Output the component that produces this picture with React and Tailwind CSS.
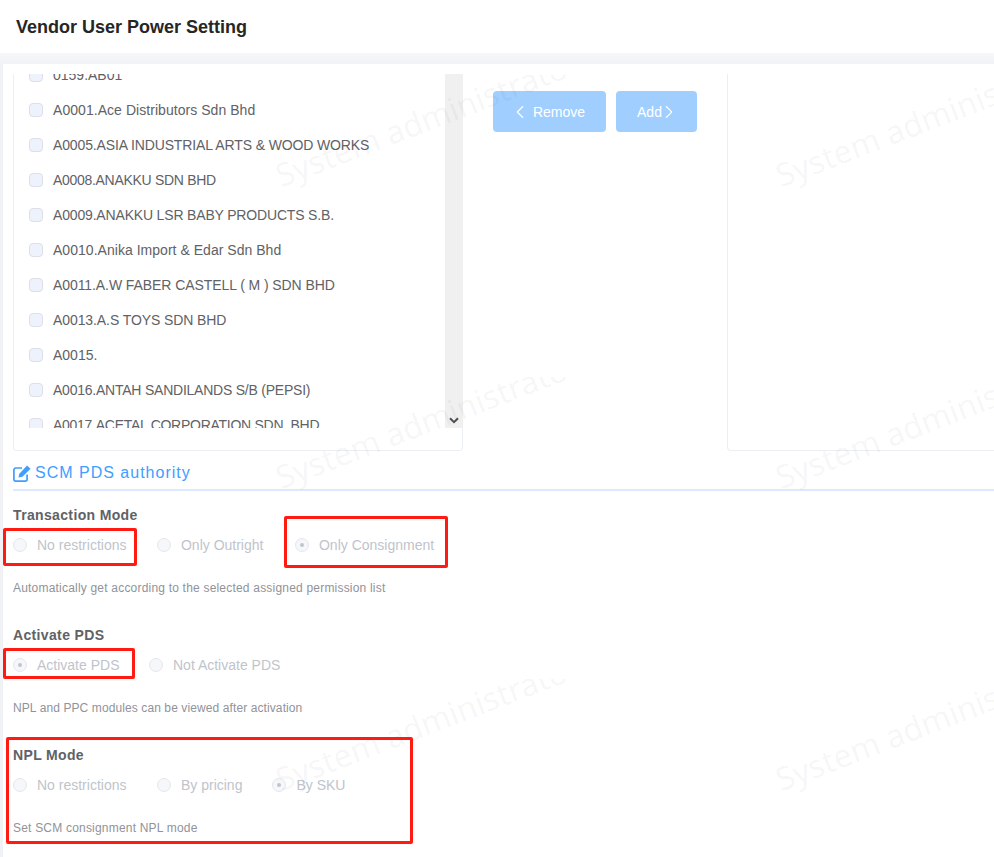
import React from "react";
import { ChevronLeft, ChevronRight } from "lucide-react";

// tracking per row, uppercase names run a bit wide in this font
const vendors = [
  { name: "0159.AB01", track: "tracking-[0px]" },
  { name: "A0001.Ace Distributors Sdn Bhd", track: "tracking-[0.05px]" },
  { name: "A0005.ASIA INDUSTRIAL ARTS & WOOD WORKS", track: "tracking-[-0.13px]" },
  { name: "A0008.ANAKKU SDN BHD", track: "tracking-[-0.3px]" },
  { name: "A0009.ANAKKU LSR BABY PRODUCTS S.B.", track: "tracking-[-0.17px]" },
  { name: "A0010.Anika Import & Edar Sdn Bhd", track: "tracking-[0.03px]" },
  { name: "A0011.A.W FABER CASTELL ( M ) SDN BHD", track: "tracking-[-0.08px]" },
  { name: "A0013.A.S TOYS SDN BHD", track: "tracking-[-0.09px]" },
  { name: "A0015.", track: "tracking-[0px]" },
  { name: "A0016.ANTAH SANDILANDS S/B (PEPSI)", track: "tracking-[-0.23px]" },
  { name: "A0017.ACETAL CORPORATION SDN. BHD", track: "tracking-[-0.27px]" },
];

// watermark tiles, they lie over the whole page
const tiles = [
  "left-[267px] top-[75px]",
  "left-[767px] top-[75px]",
  "left-[267px] top-[377px]",
  "left-[767px] top-[377px]",
  "left-[267px] top-[679px]",
  "left-[767px] top-[679px]",
];

// red annotation boxes drawn on the screenshot
const marks = [
  "left-[3px] top-[528px] w-[134px] h-[38px]",
  "left-[284px] top-[516px] w-[164px] h-[52px]",
  "left-[3px] top-[648px] w-[132px] h-[31px]",
  "left-[6px] top-[737px] w-[407px] h-[107px]",
];

function EditIcon() {
  return (
    <svg width="18" height="18" viewBox="0 0 18 18" fill="none" className="shrink-0">
      <path
        d="M9 4 H2.8 a1.9 1.9 0 0 0 -1.9 1.9 V15.2 a1.9 1.9 0 0 0 1.9 1.9 H12.2 a1.9 1.9 0 0 0 1.9 -1.9 V10.5"
        stroke="currentColor"
        strokeWidth="1.7"
      />
      <path d="M5.5 13.5 L6.2 9.9 L14 1.6 L17.6 4.8 L9.4 12.8 Z" fill="currentColor" />
    </svg>
  );
}

function Radio({ label, checked, className }) {
  return (
    <label className={`flex items-center ${className || ""}`}>
      <span className="w-[14px] h-[14px] rounded-full border border-[#e4e7ed] bg-[#f5f7fa] flex items-center justify-center shrink-0">
        {checked && <span className="w-1 h-1 rounded-full bg-[#c0c4cc]" />}
      </span>
      <span className="ml-[10px] text-sm text-[#c0c4cc]">{label}</span>
    </label>
  );
}

function FormBlock({ title, help, helpTrack, children }) {
  return (
    <div className="pb-[27px]">
      <div className="h-5 leading-5 text-sm font-bold text-[#606266] tracking-[0.35px]">{title}</div>
      <div className="mt-[5px] h-[30px] flex items-center">{children}</div>
      <div className={`mt-[18px] h-5 leading-5 text-xs text-[#909399] ${helpTrack}`}>{help}</div>
    </div>
  );
}

const App = () => {
  return (
    <div className="relative w-[994px] h-[857px] overflow-hidden bg-[#f0f2f5] font-['Liberation_Sans',Arial,sans-serif]">
      <div className="h-[53px] bg-white flex items-center pl-4">
        <h1 className="text-lg font-bold text-[#262626]">Vendor User Power Setting</h1>
      </div>

      <div className="h-[804px] pl-[3px] pt-[11px] bg-gradient-to-b from-[#f6f7f9] to-[#f0f2f5] to-[12px]">
        <div className="h-full bg-white pt-[10px] pl-[10px] overflow-hidden">
          <div className="flex w-[1100px]">
            {/* left list, scrolled */}
            <div className="w-[450px] h-[377px] border-x border-b border-[#ebeef5] rounded-b">
              <div className="flex h-[354px] -mr-px">
                <div className="flex-1 overflow-hidden">
                  <div className="-mt-[17px]">
                    {vendors.map((vendor) => (
                      <div key={vendor.name} className="h-[35px] flex items-center pl-[15px]">
                        <span className="w-[14px] h-[14px] rounded-sm border border-[#dcdfe6] bg-[#edf2fc] shrink-0" />
                        <span className={`ml-[10px] text-sm text-[#606266] whitespace-nowrap ${vendor.track}`}>{vendor.name}</span>
                      </div>
                    ))}
                  </div>
                </div>
                <div className="w-[18px] bg-[#f0f0f0] flex flex-col justify-end items-center pb-[4px]">
                  <svg width="10" height="7" viewBox="0 0 10 7" fill="none">
                    <path d="M1 1.2 L5 5.2 L9 1.2" stroke="#505050" strokeWidth="2" />
                  </svg>
                </div>
              </div>
            </div>

            {/* move buttons */}
            <div className="ml-[30px] pt-[17px] flex gap-[10px] items-start">
              <button className="h-[41px] w-[113px] pr-[5px] rounded bg-[#a0cfff] text-white text-sm flex items-center justify-center">
                <ChevronLeft size={22} strokeWidth={1.2} className="mr-[2px]" />
                Remove
              </button>
              <button className="h-[41px] w-[81px] pl-[4px] rounded bg-[#a0cfff] text-white text-sm flex items-center justify-center">
                Add
                <ChevronRight size={22} strokeWidth={1.2} className="-ml-[4px]" />
              </button>
            </div>

            {/* right list, empty */}
            <div className="ml-[30px] w-[360px] h-[377px] border-l border-b border-[#ebeef5] rounded-bl" />
          </div>

          <div className="h-[39px] mt-[1px] pt-[4px] flex items-center text-[#409eff] border-b-2 border-[#dce9fe] w-[1000px]">
            <EditIcon />
            <span className="ml-[4px] text-base tracking-[1px]">SCM PDS authority</span>
          </div>

          <div className="pt-[14px]">
            <FormBlock title="Transaction Mode" helpTrack="tracking-[0.2px]" help="Automatically get according to the selected assigned permission list">
              <Radio label="No restrictions" />
              <Radio label="Only Outright" className="ml-[30.5px]" />
              <Radio label="Only Consignment" checked className="ml-[31.5px]" />
            </FormBlock>
            <FormBlock title="Activate PDS" helpTrack="tracking-[0.1px]" help="NPL and PPC modules can be viewed after activation">
              <Radio label="Activate PDS" checked />
              <Radio label="Not Activate PDS" className="ml-[29.5px]" />
            </FormBlock>
            <FormBlock title="NPL Mode" helpTrack="tracking-[0.2px]" help="Set SCM consignment NPL mode">
              <Radio label="No restrictions" />
              <Radio label="By pricing" className="ml-[30.5px]" />
              <Radio label="By SKU" checked className="ml-[30px]" />
            </FormBlock>
          </div>
        </div>
      </div>

      {tiles.map((pos) => (
        <div key={pos} className={`absolute ${pos} w-[310px] h-[302px] overflow-hidden pointer-events-none`}>
          <span className="absolute left-[17px] top-[80px] origin-bottom-left -rotate-[21deg] whitespace-nowrap text-[32px] leading-[40px] text-black/[0.05] font-['Noto_Sans',sans-serif]">
            System administrator
          </span>
        </div>
      ))}

      {marks.map((pos) => (
        <div key={pos} className={`absolute ${pos} border-[3px] border-[#ff1a12] rounded-[2px] pointer-events-none`} />
      ))}
    </div>
  );
};

export default App;
